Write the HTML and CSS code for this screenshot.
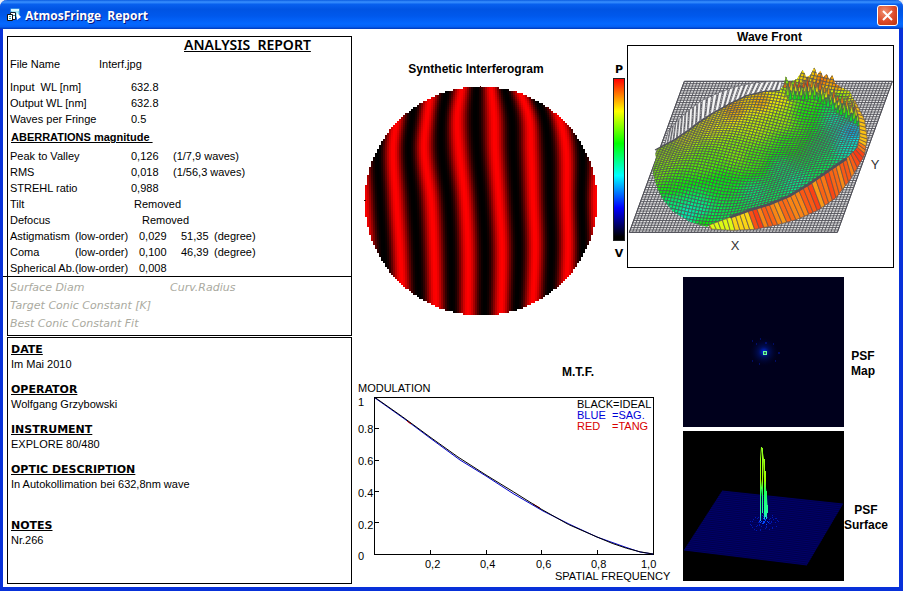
FILE: index.html
```html
<!DOCTYPE html>
<html lang="en">
<head>
<meta charset="utf-8">
<title>AtmosFringe Report</title>
<link rel="stylesheet" href="styles.css">
</head>
<body>
<div class="window">
  <header class="titlebar">
    <svg class="app-icon" width="16" height="16" viewBox="0 0 16 16" aria-hidden="true">
      <rect x="5" y="1" width="8" height="8" fill="#9fe6f6" stroke="#5ab8e4"/>
      <path d="M5 2h8" stroke="#d8f8ff" stroke-width="2"/>
      <path d="M11 5l4 4-4 3z" fill="#fff"/>
      <path d="M4.500 4.500h5v7h-5z" fill="#fff" stroke="#123"/>
      <path d="M1.500 6.500h5v6h-5z" fill="#fff" stroke="#111"/>
      <path d="M3 8.500h2M3 10.500h2M7 7.500h2" stroke="#2a9aa8"/>
    </svg>
    <h1>AtmosFringe&nbsp; Report</h1>
    <button class="close" type="button" aria-label="Close">
      <svg width="19" height="19" viewBox="0 0 19 19" aria-hidden="true"><path d="M5 5l9 9M14 5l-9 9" stroke="#fff" stroke-width="2"/></svg>
    </button>
  </header>
  <main class="report">
    <div class="details">
      <section class="panel analysis">
        <h2>ANALYSIS&nbsp; REPORT</h2>
        <dl class="file"><dt>File Name</dt><dd>Interf.jpg</dd></dl>
        <table class="values inputs">
          <tr><th>Input&nbsp; WL [nm]</th><td>632.8</td><td></td></tr>
          <tr><th>Output WL [nm]</th><td>632.8</td><td></td></tr>
          <tr><th>Waves per Fringe</th><td>0.5</td><td></td></tr>
        </table>
        <h3>ABERRATIONS magnitude&nbsp;</h3>
        <table class="values">
          <tr><th>Peak to Valley</th><td>0,126</td><td>(1/7,9 waves)</td></tr>
          <tr><th>RMS</th><td>0,018</td><td>(1/56,3 waves)</td></tr>
          <tr><th>STREHL ratio</th><td>0,988</td><td></td></tr>
          <tr><th>Tilt</th><td class="removed" colspan="2">Removed</td></tr>
        </table>
        <table class="values">
          <colgroup><col class="name"><col class="order"><col class="amount"><col class="angle"><col></colgroup>
          <tr><th>Defocus</th><td></td><td class="removed" colspan="3">Removed</td></tr>
          <tr><th>Astigmatism</th><td>(low-order)</td><td>0,029</td><td>51,35</td><td>(degree)</td></tr>
          <tr><th>Coma</th><td>(low-order)</td><td>0,100</td><td>46,39</td><td>(degree)</td></tr>
          <tr><th>Spherical Ab.</th><td>(low-order)</td><td>0,008</td><td></td><td></td></tr>
        </table>
        <div class="conic">
          <p><span>Surface Diam</span><span>Curv.Radius</span></p>
          <p>Target Conic Constant [K]</p>
          <p>Best Conic Constant Fit</p>
        </div>
      </section>
      <section class="panel session">
        <h3>DATE</h3><p>Im Mai 2010</p>
        <h3>OPERATOR</h3><p>Wolfgang Grzybowski</p>
        <h3>INSTRUMENT</h3><p>EXPLORE 80/480</p>
        <h3>OPTIC DESCRIPTION</h3><p class="long">In Autokollimation bei 632,8nm wave</p>
        <h3>NOTES</h3><p>Nr.266</p>
      </section>
    </div>
    <div class="plots">
      <figure class="interferogram">
        <figcaption>Synthetic Interferogram</figcaption>
        <svg id="fringes" width="234" height="231" viewBox="0 0 234 231" role="img" aria-label="Synthetic Interferogram" shape-rendering="crispEdges"></svg>
      </figure>
      <div class="scale"><b>P</b><div class="scale-bar"></div><b>V</b></div>
      <figure class="wavefront">
        <figcaption>Wave Front</figcaption>
        <div class="frame">
          <svg id="wave" width="265" height="221" viewBox="24 63 795 663" role="img" aria-label="Wave Front"></svg>
        </div>
      </figure>
      <figure class="mtf">
        <figcaption>M.T.F.</figcaption>
        <svg width="316" height="202" viewBox="355 380 316 202" role="img" aria-label="Modulation transfer function">
          <g fill="none" stroke="#000" shape-rendering="crispEdges">
            <rect x="374.5" y="397.5" width="279" height="157"/>
            <path d="M375 428.500h4M375 460.500h4M375 491.500h4M375 522.500h4M430.500 554v-4M486.500 554v-4M541.500 554v-4M597.500 554v-4"/>
          </g>
          <path d="M375 398L406 420L430 438L460 460L486 476L513 493.500L543 511L570 524.500L597 537L625 547L640 552L653 554" fill="none" stroke="#00c"/>
          <path d="M407 421l4 3M533 504l7 4" stroke="#d00"/>
          <path d="M375 397.500Q402 416 430 437T486 475T541 509T597 537Q628 551 653 554" fill="none" stroke="#000"/>
          <g class="axis">
            <text x="358" y="392">MODULATION</text>
            <text x="358" y="406">1</text><text x="358" y="433">0.8</text><text x="358" y="465">0.6</text><text x="358" y="497">0.4</text><text x="358" y="529">0.2</text><text x="358" y="560">0</text>
            <text x="425" y="568">0,2</text><text x="480" y="568">0,4</text><text x="536" y="568">0,6</text><text x="591" y="568">0,8</text><text x="641" y="568">1,0</text>
            <text x="555" y="580">SPATIAL FREQUENCY</text>
            <text x="577" y="408">BLACK=IDEAL</text>
            <text x="577" y="419" fill="#0000d8">BLUE</text><text x="612" y="419" fill="#0000d8">=SAG.</text>
            <text x="577" y="430" fill="#d80000">RED</text><text x="612" y="430" fill="#d80000">=TANG</text>
          </g>
        </svg>
      </figure>
      <div class="psf">
        <figure>
          <svg width="161" height="150" viewBox="0 0 161 150" role="img" aria-label="PSF Map">
            <defs><radialGradient id="glow"><stop offset="0" stop-color="#0030ff"/><stop offset=".35" stop-color="#001a90" stop-opacity=".5"/><stop offset="1" stop-color="#00001c" stop-opacity="0"/></radialGradient></defs>
            <rect width="161" height="150" fill="#00001c"/>
            <circle cx="81" cy="75" r="15" fill="url(#glow)"/>
            <path d="M69 64h1M73 67h1M77 62h1M90 67h1M69 84h1M92 84h1M95 76h2M76 87h1M83 65v2" stroke="#0018b0"/>
            <rect x="80" y="74" width="4" height="4" fill="#6dffa0"/><rect x="81" y="75" width="2" height="2" fill="#287060"/>
          </svg>
          <figcaption>PSF<br>Map</figcaption>
        </figure>
        <figure>
          <svg id="peak" width="161" height="150" viewBox="0 0 161 150" role="img" aria-label="PSF Surface"></svg>
          <figcaption>PSF<br>Surface</figcaption>
        </figure>
      </div>
    </div>
  </main>
</div>
<script src="report.js"></script>
</body>
</html>
```
FILE: styles.css
```css
* { box-sizing: border-box; }
body {
  margin: 0;
  background: #e8eef8;
  color: #000;
  font: 11px/16px "Liberation Sans", Arial, sans-serif;
}
h1, h2, h3, p, dl, dd, figure { margin: 0; }
svg { display: block; }

.window {
  display: flex;
  flex-direction: column;
  min-height: 100vh;
  border: solid #0831d9;
  border-width: 0 4px 4px 3px;
  border-radius: 7px 7px 0 0;
  background: #fff;
}
.titlebar {
  display: flex;
  align-items: center;
  height: 29px;
  margin: 0 -4px 0 -3px;
  padding: 2px 5px 0 6px;
  border-radius: 7px 7px 0 0;
  background: linear-gradient(#0a5be0 0, #3a91ff 7%, #0860ee 15%, #0054e3 32%, #0058ec 55%, #0468ff 82%, #0460f4 92%, #0038b8 100%);
}
.titlebar h1 {
  flex: 1;
  margin-left: 3px;
  color: #fff;
  font: bold 12px/20px "Open Sans", sans-serif;
  text-shadow: 1px 1px #0a1883;
}
.close {
  width: 21px;
  height: 21px;
  padding: 0;
  border: 1px solid #fff;
  border-radius: 3px;
  background: radial-gradient(circle at 35% 30%, #f09070, #dc4a28 55%, #b83410);
}

.report {
  flex: 1;
  display: grid;
  grid-template-columns: minmax(300px, 1fr) auto;
}
.details {
  display: flex;
  flex-direction: column;
  gap: 1px;
  padding: 7px 2px 3px 4px;
}
.panel { border: 1px solid #000; }
.analysis h2 {
  padding-left: 176px;
  font: 600 14px/16px "Noto Sans", sans-serif;
  text-decoration: underline;
  white-space: nowrap;
}
.file { display: flex; padding: 3px 0 7px 2px; }
.file dt { width: 89px; }
.analysis h3 { padding: 2px 0 3px 3px; font-size: 11px; line-height: 16px; text-decoration: underline; }
.values { width: 100%; table-layout: fixed; border-collapse: collapse; }
.values th, .values td { height: 16px; padding: 0; text-align: left; font-weight: normal; white-space: nowrap; }
.values th { width: 123px; padding-left: 2px; }
.values td:nth-child(2) { width: 42px; }
.values .name { width: 67px; }
.values .order { width: 64px; }
.values .amount { width: 42px; }
.values .angle { width: 33px; }
.values .removed { padding-left: 3px; }
.conic {
  margin-left: -5px;
  padding: 2px 0 2px 7px;
  border-top: 1px solid #000;
  color: #aaaaa0;
  font: italic 11px/18px "DejaVu Sans", sans-serif;
}
.conic p { display: flex; }
.conic span:first-child { width: 160px; }
.session { flex: 1; padding: 4px 3px; }
.session h3 { font: bold 11px/15px "DejaVu Sans", sans-serif; text-decoration: underline; }
.session p { line-height: 15px; padding-bottom: 10px; }
.session .long { padding-bottom: 26px; }

figcaption { font-weight: bold; font-size: 12px; line-height: 15px; text-align: center; }
.plots {
  display: grid;
  grid-template-columns: 255px 14px 56px 216px;
  grid-template-rows: 248px 88px auto;
  padding-left: 4px;
}
.interferogram { grid-area: 1 / 1 / 3 / 2; padding: 33px 15px 0 6px; }
.interferogram figcaption { padding-right: 10px; }
.interferogram svg { margin-top: 9px; }
.scale {
  grid-area: 1 / 2 / 2 / 3;
  display: flex;
  flex-direction: column;
  width: 12px;
  padding-top: 33px;
  text-align: center;
  font: bold 11px/16px "DejaVu Sans", sans-serif;
}
.scale-bar {
  height: 163px;
  margin-bottom: 5px;
  border: 1px solid #222;
  background: linear-gradient(#f00, #ff0 20%, #0f0 40%, #0ff 60%, #00f 80%, #000 98%);
}
.wavefront { grid-area: 1 / 3 / 2 / 5; padding-right: 5px; }
.wavefront figcaption { line-height: 16px; margin-right: -18px; }
.frame { width: 267px; border: 1px solid #000; }
.mtf { grid-area: 3 / 1 / 4 / 4; margin-left: -3px; }
.mtf figcaption { padding-left: 118px; }
.axis text { font: 11px "Liberation Sans", Arial, sans-serif; }
.psf { grid-area: 2 / 4 / 4 / 5; display: flex; flex-direction: column; gap: 4px; }
.psf figure { display: flex; align-items: center; }
.psf figcaption { min-width: 38px; padding-top: 24px; }
```
FILE: report.js
```js
const NS = 'http://www.w3.org/2000/svg';
const shape = (tag, attrs) => {
  const el = document.createElementNS(NS, tag);
  for (const k in attrs) el.setAttribute(k, attrs[k]);
  return el;
};
const poly = (pts, fill, stroke, width) =>
  shape('polygon', { points: pts.map(p => p.join()).join(' '), fill, stroke, 'stroke-width': width });
const lerp = (a, b, t) => a + (b - a) * t;
const noise = n => { const s = Math.sin(n * 127.1) * 43758.5453; return s - Math.floor(s); };

// Interferogram: bright fringe positions sampled at several heights.
(function () {
  const svg = document.getElementById('fringes');
  const rows = [
    [0, [5, 37, 67, 97, 126, 153, 181, 212]],
    [30, [3, 32, 62, 92, 129, 164, 194, 226]],
    [63, [-3, 28, 59, 94, 130, 166, 201, 233]],
    [113, [-1, 31, 66, 100, 134, 168, 202, 231]],
    [163, [2, 35, 69, 103, 137, 170, 203, 233]],
    [230, [5, 38, 71, 103, 136, 167, 200, 233]]
  ];
  const slope = (k, i) => {
    const a = rows[Math.max(0, k - 1)], b = rows[Math.min(rows.length - 1, k + 1)];
    return (b[1][i] - a[1][i]) / (b[0] - a[0]);
  };
  for (let y = 1; y < 229; y += 2) {
    let k = 0;
    while (k < rows.length - 2 && rows[k + 1][0] < y) k++;
    const h = rows[k + 1][0] - rows[k][0], t = (y - rows[k][0]) / h;
    const f = rows[k][1].map((x, i) =>
      x * (2 * t ** 3 - 3 * t * t + 1) + rows[k + 1][1][i] * (3 * t * t - 2 * t ** 3) +
      h * (slope(k, i) * (t ** 3 - 2 * t * t + t) + slope(k + 1, i) * (t ** 3 - t * t)));
    for (let x = 1; x < 232; x += 2) {
      if (((x - 116) / 116) ** 2 + ((y - 114) / 114.5) ** 2 > 1) continue;
      let i = 0;
      while (i < 6 && f[i + 1] < x) i++;
      const c = ((1 + Math.cos(2 * Math.PI * (x - f[i]) / (f[i + 1] - f[i]))) / 2) ** 1.25;
      svg.append(shape('rect', { x, y, width: 2, height: 2, fill: `rgb(${Math.round(255 * c)},0,0)` }));
    }
  }
  svg.append(shape('path', { d: 'M116.500 0v2M0 114.500h2', stroke: '#400' }));
})();

// Wave front: flat reference grid, shaded mesh and rim walls.
(function () {
  const svg = document.getElementById('wave');
  const line = '#505058';
  svg.append(poly([[193, 169], [817, 169], [652, 622], [28, 622]], '#e6e6e6', line, 3));
  let d = '';
  for (let i = 0; i <= 64; i++) {
    const u = i * 9.75, v = i / 64;
    d += `M${193 + u} 169L${28 + u} 622M${193 - 165 * v} ${169 + 453 * v}h624`;
  }
  svg.append(shape('path', { d, stroke: line, 'stroke-width': 2.7, fill: 'none' }));

  const along = (pts, t) => {
    const s = t * (pts.length - 1), i = Math.min(pts.length - 2, Math.floor(s));
    return [lerp(pts[i][0], pts[i + 1][0], s - i), lerp(pts[i][1], pts[i + 1][1], s - i)];
  };

  const backOuter = [[145, 318], [170, 290], [203, 258], [243, 228], [296, 203], [350, 184], [400, 174], [450, 169], [490, 170]];
  const backInner = [[132, 362], [162, 344], [197, 320], [237, 289], [282, 261], [330, 236], [380, 212], [430, 202], [480, 198]];
  for (let i = 0; i < 26; i++) {
    const a = along(backOuter, i / 26), b = along(backOuter, (i + .7) / 26);
    const c = along(backInner, (i + .9) / 26), e = along(backInner, (i + .2) / 26);
    svg.append(poly([a, b, c, e], '#f4f4f4', line, 2));
  }

  const outline = [[105, 375], [130, 362], [165, 344], [200, 320], [240, 290], [280, 264], [330, 236], [380, 212], [430, 200], [480, 196],
    [492, 180], [497, 153], [506, 172], [516, 168], [530, 163], [548, 135], [560, 157], [571, 150], [583, 127], [592, 150], [601, 137], [610, 157],
    [620, 147], [628, 162], [637, 150], [646, 176], [662, 186], [690, 200], [710, 245], [722, 280], [720, 340], [715, 365], [680, 400], [630, 432], [560, 480],
    [500, 515], [440, 540], [380, 555], [330, 578], [260, 605], [210, 590], [160, 560], [130, 525], [112, 490], [98, 440], [108, 400]];
  const clip = shape('clipPath', { id: 'rim' });
  clip.append(poly(outline, '#000'));
  svg.append(clip);
  const hues = [[340, 250, 40], [420, 225, 40], [480, 220, 55], [260, 290, 56], [190, 330, 63], [130, 390, 80], [120, 440, 90], [150, 480, 115], [150, 530, 150],
    [200, 560, 168], [240, 550, 158], [300, 480, 124], [350, 380, 88], [400, 300, 72], [480, 280, 80], [550, 260, 118], [560, 210, 125], [620, 240, 145],
    [640, 280, 168], [690, 320, 200], [680, 360, 168], [600, 380, 140], [500, 350, 115], [480, 430, 145], [520, 470, 155], [400, 500, 148], [300, 570, 138],
    [400, 400, 105], [250, 400, 98], [250, 600, 110], [600, 165, 15], [550, 160, 40], [510, 180, 95], [650, 210, 110], [695, 220, 55], [650, 180, 15], [580, 190, 75]];
  const hue = (x, y) => {
    let s = 0, w = 0;
    for (const [a, b, h] of hues) {
      const q = 1 / (((x - a) ** 2 + (y - b) ** 2 + 400) ** 1.5);
      s += q * h; w += q;
    }
    return s / w;
  };
  const mesh = shape('g', { 'clip-path': 'url(#rim)' });
  const point = (i, j) => {
    const u = i / 64, v = j / 64;
    return [193 + 624 * u - 165 * v, 120 + 500 * v + 16 * Math.sin(u * 9 + v * 5) + 10 * Math.sin(v * 7)];
  };
  for (let j = -3; j < 66; j++) for (let i = 0; i < 66; i++) {
    const p = point(i, j);
    mesh.append(poly([p, point(i + 1, j), point(i + 1, j + 1), point(i, j + 1)], `hsl(${hue(p[0], p[1])},100%,47%)`, line, 2.1));
  }
  for (let r = 0; r < 4; r++) for (let i = 0; i < 17; i++) {
    const x = 496 + i * 13 + r * 4 + noise(i + r * 20) * 5;
    const y = 178 + r * 12 + Math.max(0, x - 590) * .62;
    const tall = 8 + noise(i * 3 + r) * 16;
    mesh.append(poly([[x - 7, y + 10], [x, y - tall], [x + 4, y + 10]], `hsl(${16 + r * 32 + noise(i + 5) * 24},95%,46%)`, line, 2));
  }
  svg.append(mesh);
  svg.append(shape('polyline', { points: outline.slice(0, 10).join(' '), fill: 'none', stroke: line, 'stroke-width': 4 }));

  const inner = [[268, 600], [330, 577], [390, 555], [450, 537], [510, 512], [570, 475], [630, 434], [680, 400], [712, 368], [720, 330], [716, 275], [700, 225]];
  const outer = [[270, 612], [335, 616], [405, 613], [470, 600], [535, 582], [595, 555], [648, 518], [692, 462], [733, 392], [742, 340], [734, 285], [705, 228]];
  svg.append(poly(inner.concat(outer.slice().reverse()), '#f0702a', 'none', 0));
  for (let i = 0; i < 52; i++) {
    const t = i / 52;
    const h = t < .09 ? 68 : t < .16 ? 50 : t > .75 ? 45 : 10 + noise(i) * 26;
    svg.append(poly([along(inner, t), along(inner, Math.min(1, t + .019)), along(outer, Math.min(1, t + .026)), along(outer, Math.min(1, t + .008))],
      `hsl(${h},96%,53%)`, line, 1.8));
  }
  svg.append(shape('polyline', { points: inner.slice(1, 8).join(' '), fill: 'none', stroke: line, 'stroke-width': 8 }));
  for (const [x, y, s] of [[332, 674, 'X'], [752, 431, 'Y']]) {
    const t = shape('text', { x, y, fill: '#333', 'font-size': 39, 'font-family': 'Liberation Sans' });
    t.textContent = s;
    svg.append(t);
  }
})();

// Point spread function: dark plane with a narrow central peak.
(function () {
  const svg = document.getElementById('peak');
  svg.append(shape('rect', { width: 161, height: 150, fill: '#000' }));
  svg.append(poly([[39, 60], [160, 73], [124, 134], [1, 119]], '#00004c', 'none', 0));
  let d = '';
  for (let i = 0; i <= 32; i++) {
    const t = i / 32;
    d += `M${39 - 38 * t} ${60 + 59 * t}L${160 - 36 * t} ${73 + 61 * t}`;
  }
  svg.append(shape('path', { d, stroke: '#000070', 'stroke-width': .8 }));
  for (let i = 0; i < 90; i++) {
    const a = noise(i) * 6.28, r = noise(i + 200) ** 1.5 * 18;
    svg.append(shape('rect', { x: Math.round(81 + Math.cos(a) * r), y: Math.round(90 + Math.sin(a) * r * .6), width: 1, height: 1, fill: r < 5 ? '#0048ff' : '#0018b0' }));
  }
  const g = shape('linearGradient', { id: 'rise', gradientUnits: 'userSpaceOnUse', x1: 0, x2: 0, y1: 16, y2: 90 });
  for (const [o, c] of [[0, '#90ff20'], [.45, '#a0ff00'], [.6, '#20ff60'], [.9, '#20ffa0'], [1, '#20a0ff']])
    g.append(shape('stop', { offset: o, 'stop-color': c }));
  svg.append(g);
  svg.append(shape('path', { d: 'M77.500 90V28L78.500 16L80.500 28L81.500 48L83.500 66L84.500 82V74M79.500 17V82M81.500 28V88M82.500 40V86M83.500 60V88M77.500 48L79.500 66', stroke: 'url(#rise)', fill: 'none', 'stroke-width': 1 }));
})();
```
